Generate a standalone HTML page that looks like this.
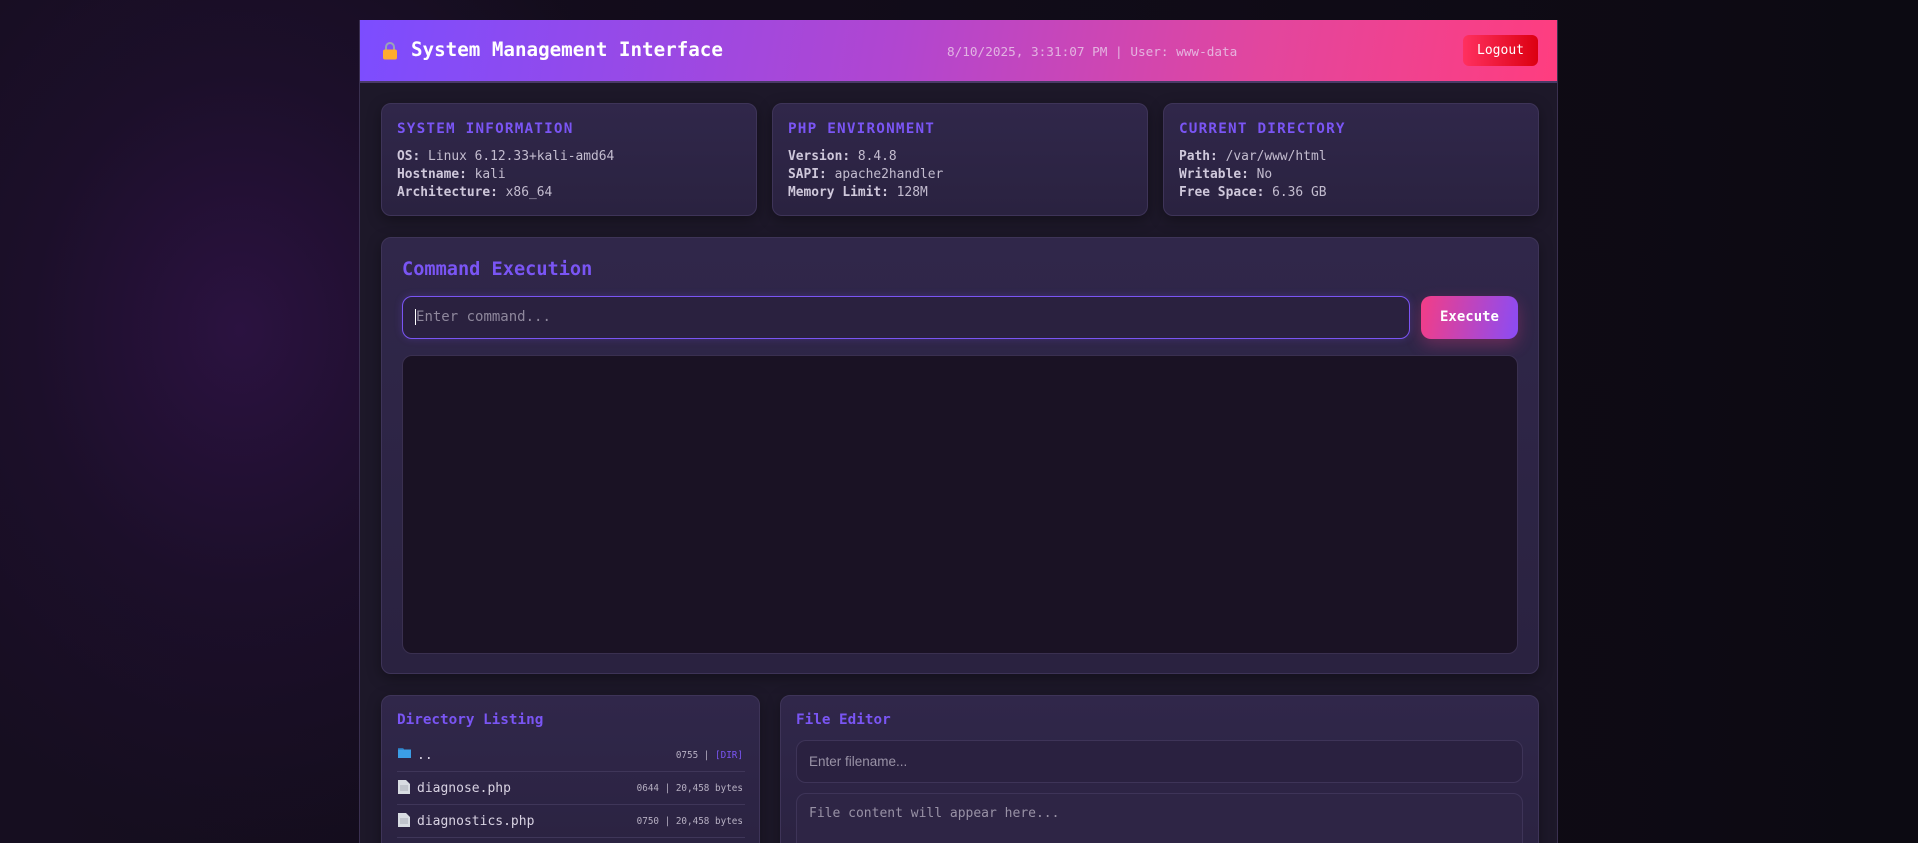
<!DOCTYPE html>
<html><head><meta charset="utf-8"><style>
*{box-sizing:border-box;margin:0;padding:0}
html,body{width:1918px;height:843px;overflow:hidden}
body{background:radial-gradient(ellipse 420px 520px at 240px 330px,#2b1240 0%,#1c0f2a 50%,transparent 100%),linear-gradient(90deg,#160e20 0%,#120c1a 40%,#0c0a12 100%);font-family:"DejaVu Sans Mono","Liberation Mono",monospace;color:#c9c2d6;position:relative}
.wrap{position:absolute;left:359px;top:20px;width:1199px;height:823px;background:#1d1829;border:1px solid #3a3050;border-top:none;border-bottom:none;overflow:hidden}
.hdr{position:absolute;left:0;top:0;width:1199px;height:63px;background:linear-gradient(100deg,#7c4dff 0%,#b146d0 45%,#e2469e 75%,#ff3d7f 100%);border-bottom:2px solid #4a3a68}
.lock{position:absolute;left:22px;top:21px}
.title{position:absolute;left:51px;top:18px;font-size:19.2px;font-weight:bold;color:#fff}
.info{position:absolute;left:587px;top:24px;font-size:12.7px;color:#e8c6e8;opacity:.85}
.logout{position:absolute;left:1103px;top:15px;width:75px;height:31px;border-radius:6px;background:linear-gradient(90deg,#ff3060,#dc0010);color:#fff;font-size:13px;text-align:center;line-height:31px}
.card{position:absolute;background:linear-gradient(180deg,#30274a,#2a2240);border:1px solid #3e3458;border-radius:10px;box-shadow:0 4px 14px rgba(0,0,0,.35)}
.ct{color:#7a55f4;font-weight:bold;font-size:14.3px;letter-spacing:1.2px}
.ln{font-size:12.9px;line-height:18px;color:#c3bccf}
.ln b{color:#cfc8db}
.h2{color:#7a55f4;font-weight:bold}
.inp{position:absolute;border-radius:10px}
.row{position:absolute;left:15px;width:348px;height:33px;border-bottom:1px solid #3f3659}
.row .n{position:absolute;left:20px;top:9px;font-size:13px;color:#d8d2e2}
.row .m{position:absolute;right:2px;top:11px;font-size:9.3px;color:#b6afc2}
.fi{position:absolute;left:1px;top:8px}
</style></head><body>
<div class="wrap">
 <div class="hdr">
  <svg class="lock" width="16" height="19" viewBox="0 0 16 19"><path d="M4 9V6a4 4 0 0 1 8 0v3" fill="none" stroke="#9aa3b8" stroke-width="2"/><rect x="1" y="8.5" width="14" height="10" rx="2" fill="#ffab2e"/></svg>
  <div class="title">System Management Interface</div>
  <div class="info">8/10/2025, 3:31:07 PM | User: www-data</div>
  <div class="logout">Logout</div>
 </div>
 <div class="card" style="left:21px;top:83px;width:376px;height:113px;padding:17px 15px">
  <div class="ct">SYSTEM INFORMATION</div>
  <div class="ln" style="margin-top:11px"><b>OS:</b> Linux 6.12.33+kali-amd64<br><b>Hostname:</b> kali<br><b>Architecture:</b> x86_64</div>
 </div>
 <div class="card" style="left:412px;top:83px;width:376px;height:113px;padding:17px 15px">
  <div class="ct">PHP ENVIRONMENT</div>
  <div class="ln" style="margin-top:11px"><b>Version:</b> 8.4.8<br><b>SAPI:</b> apache2handler<br><b>Memory Limit:</b> 128M</div>
 </div>
 <div class="card" style="left:803px;top:83px;width:376px;height:113px;padding:17px 15px">
  <div class="ct">CURRENT DIRECTORY</div>
  <div class="ln" style="margin-top:11px"><b>Path:</b> /var/www/html<br><b>Writable:</b> No<br><b>Free Space:</b> 6.36 GB</div>
 </div>
 <div class="card" style="left:21px;top:217px;width:1158px;height:437px">
  <div class="h2" style="position:absolute;left:20px;top:21px;font-size:18.6px">Command Execution</div>
  <div class="inp" style="left:20px;top:58px;width:1008px;height:43px;border:1.5px solid #7a55f4;background:#2a213f;box-shadow:0 0 8px rgba(122,85,244,.25)">
   <div style="position:absolute;left:12px;top:12px;font-size:14px;color:#8e879c"><span style="border-left:1px solid #fff">E</span>nter command...</div>
  </div>
  <div class="inp" style="left:1039px;top:58px;width:97px;height:43px;background:linear-gradient(100deg,#f33d86,#8a4cf5);color:#fff;font-weight:bold;font-size:14px;text-align:center;line-height:43px;box-shadow:0 6px 16px rgba(240,60,130,.3)">Execute</div>
  <div class="inp" style="left:20px;top:117px;width:1116px;height:299px;background:#1a1224;border:1px solid #3a3050"></div>
 </div>
 <div class="card" style="left:21px;top:675px;width:379px;height:180px">
  <div class="h2" style="position:absolute;left:15px;top:16px;font-size:14.3px">Directory Listing</div>
  <div class="row" style="top:43px"><svg class="fi" width="13" height="11" viewBox="0 0 13 11"><path d="M0 1h5l1 1.5h7V11H0z" fill="#3b9ee6"/><path d="M0 1h5l1 1.5H0z" fill="#2a70b0"/></svg><div class="n">..</div><div class="m">0755 | <span style="color:#7a55f4">[DIR]</span></div></div>
  <div class="row" style="top:76px"><svg class="fi" width="12" height="14" viewBox="0 0 12 14"><path d="M0 0h8l4 4v10H0z" fill="#d8dce2"/><path d="M2 6h8M2 8h8M2 10h8" stroke="#a8adb6"/></svg><div class="n">diagnose.php</div><div class="m">0644 | 20,458 bytes</div></div>
  <div class="row" style="top:109px"><svg class="fi" width="12" height="14" viewBox="0 0 12 14"><path d="M0 0h8l4 4v10H0z" fill="#d8dce2"/><path d="M2 6h8M2 8h8M2 10h8" stroke="#a8adb6"/></svg><div class="n">diagnostics.php</div><div class="m">0750 | 20,458 bytes</div></div>
 </div>
 <div class="card" style="left:420px;top:675px;width:759px;height:180px">
  <div class="h2" style="position:absolute;left:15px;top:16px;font-size:14.3px">File Editor</div>
  <div class="inp" style="left:15px;top:44px;width:727px;height:43px;background:#2a2140;border:1px solid #3e3458"><div style="position:absolute;left:12px;top:13px;font-family:'Liberation Sans',sans-serif;font-size:13.5px;color:#9992a6">Enter filename...</div></div>
  <div class="inp" style="left:15px;top:97px;width:727px;height:100px;background:#2e2545;border:1px solid #3e3458"><div style="position:absolute;left:12px;top:12px;font-size:13px;color:#9992a6">File content will appear here...</div></div>
 </div>
</div>
</body></html>
